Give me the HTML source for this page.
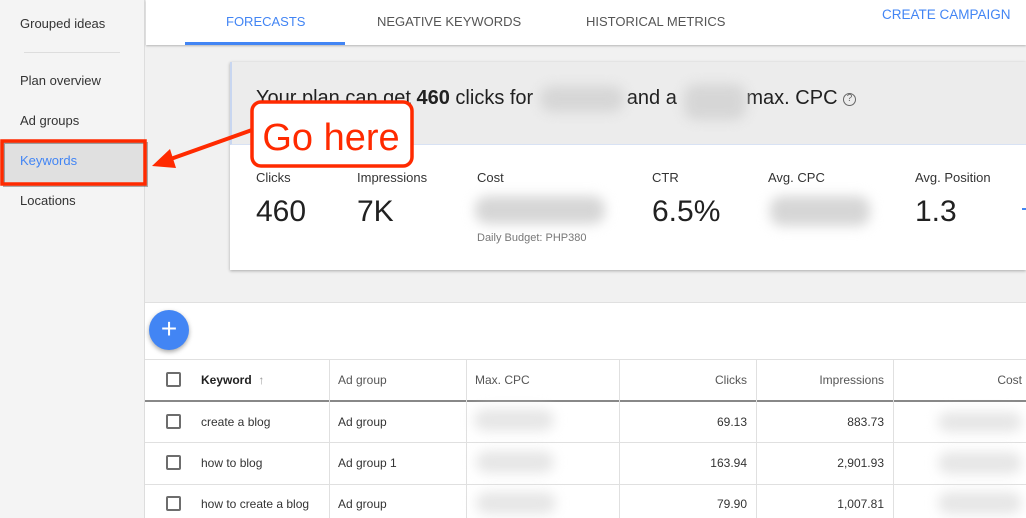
<!DOCTYPE html>
<html><head><meta charset="utf-8"><style>
*{margin:0;padding:0;box-sizing:border-box}
body{width:1026px;height:518px;overflow:hidden;position:relative;font-family:"Liberation Sans",sans-serif;background:#f1f1f1;color:#212121}
.a{position:absolute;white-space:nowrap}
.side{left:0;top:0;width:145px;height:518px;background:#f4f4f4;border-right:1px solid #ddd}
.side .it{position:absolute;left:20px;font-size:13px;color:#333}
.blur{position:absolute;background:#d6d6d6;filter:blur(6px);border-radius:12px}
.lbl{font-size:13px;color:#333}
.big{font-size:30px;color:#212121}
.th{font-size:12px;color:#555}
.td{font-size:12px;color:#333}
.cb{position:absolute;width:15px;height:15px;border:2px solid #6d6d6d;border-radius:2px;left:166px}
.vl{position:absolute;width:1px;background:#e0e0e0;top:360px;height:158px}
.hl{position:absolute;left:145px;width:881px;height:1px;background:#e0e0e0}
</style></head><body>
<div class="a side">
<div class="it" style="top:16px">Grouped ideas</div>
<div style="position:absolute;left:24px;top:52px;width:96px;height:1px;background:#ddd"></div>
<div class="it" style="top:73px">Plan overview</div>
<div class="it" style="top:113px">Ad groups</div>
<div style="position:absolute;left:0;top:142px;width:145px;height:42px;background:#e0e0e0"></div>
<div class="it" style="top:153px;color:#4285f4">Keywords</div>
<div class="it" style="top:193px">Locations</div>
</div>
<div class="a" style="left:146px;top:0;width:880px;height:45px;background:#fff;box-shadow:0 1px 2px rgba(0,0,0,.25)"></div>
<div class="a" style="left:226px;top:14px;font-size:13px;color:#4285f4">FORECASTS</div>
<div class="a" style="left:185px;top:42px;width:160px;height:3px;background:#4285f4"></div>
<div class="a" style="left:377px;top:14px;font-size:13px;color:#555">NEGATIVE KEYWORDS</div>
<div class="a" style="left:586px;top:14px;font-size:13px;color:#555">HISTORICAL METRICS</div>
<div class="a" style="left:882px;top:7px;font-size:13.5px;color:#4285f4">CREATE CAMPAIGN</div>
<!-- card -->
<div class="a" style="left:230px;top:62px;width:796px;height:208px;background:#fff;box-shadow:0 1px 3px rgba(0,0,0,.3)"></div>
<div class="a" style="left:230px;top:62px;width:796px;height:83px;background:#ececec;border-left:2px solid #c8d6f0;border-bottom:1px solid #d8e2f4"></div>
<div class="a" style="left:256px;top:87px;font-size:20px;color:#212121">Your plan can get <b>460</b> clicks for <span style="display:inline-block;width:88px"></span>and a <span style="display:inline-block;width:64px"></span>max. CPC <span style="display:inline-block;width:13px;height:13px;border:1.5px solid #666;border-radius:50%;text-align:center;line-height:10px;font-size:10px;vertical-align:3px;color:#666">?</span></div>
<div class="blur" style="left:540px;top:86px;width:84px;height:26px"></div>
<div class="blur" style="left:684px;top:84px;width:62px;height:36px"></div>
<div class="a lbl" style="left:256px;top:170px">Clicks</div>
<div class="a big" style="left:256px;top:195px">460</div>
<div class="a lbl" style="left:357px;top:170px">Impressions</div>
<div class="a big" style="left:357px;top:195px">7K</div>
<div class="a lbl" style="left:477px;top:170px">Cost</div>
<div class="blur" style="left:475px;top:196px;width:130px;height:28px"></div>
<div class="a" style="left:477px;top:232px;font-size:11px;color:#777">Daily Budget: PHP380</div>
<div class="a lbl" style="left:652px;top:170px">CTR</div>
<div class="a big" style="left:652px;top:195px">6.5%</div>
<div class="a lbl" style="left:768px;top:170px">Avg. CPC</div>
<div class="blur" style="left:770px;top:196px;width:100px;height:30px"></div>
<div class="a lbl" style="left:915px;top:170px">Avg. Position</div>
<div class="a big" style="left:915px;top:195px">1.3</div>
<div class="a" style="left:1022px;top:208px;width:4px;height:2px;background:#4285f4"></div>
<!-- table -->
<div class="a" style="left:145px;top:302px;width:881px;height:216px;background:#fff;border-top:1px solid #e0e0e0"></div>
<div class="a" style="left:149px;top:310px;width:40px;height:40px;border-radius:50%;background:#4285f4;box-shadow:0 2px 5px rgba(0,0,0,.35);color:#fff;font-size:28px;text-align:center;line-height:38px">+</div>
<div class="hl" style="top:359px"></div>
<div class="a" style="left:145px;top:400px;width:881px;height:2px;background:#888"></div>
<div class="hl" style="top:442px"></div>
<div class="hl" style="top:484px"></div>
<div class="vl" style="left:329px"></div><div class="vl" style="left:466px"></div><div class="vl" style="left:619px"></div><div class="vl" style="left:756px"></div><div class="vl" style="left:893px"></div>
<div class="cb" style="top:372px"></div><div class="cb" style="top:414px"></div><div class="cb" style="top:455px"></div><div class="cb" style="top:496px"></div>
<div class="a" style="left:201px;top:373px;font-size:12px;font-weight:bold;color:#212121">Keyword <span style="color:#999;font-weight:normal">&nbsp;↑</span></div>
<div class="a th" style="left:338px;top:373px">Ad group</div>
<div class="a th" style="left:475px;top:373px">Max. CPC</div>
<div class="a th" style="right:279px;top:373px">Clicks</div>
<div class="a th" style="right:142px;top:373px">Impressions</div>
<div class="a th" style="right:4px;top:373px">Cost</div>
<div class="a td" style="left:201px;top:415px">create a blog</div>
<div class="a td" style="left:201px;top:456px">how to blog</div>
<div class="a td" style="left:201px;top:497px">how to create a blog</div>
<div class="a td" style="left:338px;top:415px">Ad group</div>
<div class="a td" style="left:338px;top:456px">Ad group 1</div>
<div class="a td" style="left:338px;top:497px">Ad group</div>
<div class="a td" style="right:279px;top:415px">69.13</div>
<div class="a td" style="right:279px;top:456px">163.94</div>
<div class="a td" style="right:279px;top:497px">79.90</div>
<div class="a td" style="right:142px;top:415px">883.73</div>
<div class="a td" style="right:142px;top:456px">2,901.93</div>
<div class="a td" style="right:142px;top:497px">1,007.81</div>
<div class="blur" style="left:474px;top:409px;width:80px;height:22px;background:#e6e6e6"></div>
<div class="blur" style="left:476px;top:451px;width:78px;height:22px;background:#e6e6e6"></div>
<div class="blur" style="left:476px;top:492px;width:80px;height:22px;background:#e6e6e6"></div>
<div class="blur" style="left:938px;top:412px;width:84px;height:20px;background:#e6e6e6"></div>
<div class="blur" style="left:938px;top:452px;width:84px;height:22px;background:#e6e6e6"></div>
<div class="blur" style="left:938px;top:492px;width:84px;height:22px;background:#e6e6e6"></div>
<!-- annotations -->
<svg class="a" style="left:0;top:0" width="1026" height="518">
<rect x="4" y="143" width="143" height="43" fill="none" stroke="rgba(0,0,0,.3)" stroke-width="2"/>
<rect x="2" y="141" width="143" height="43" fill="none" stroke="#ff2a00" stroke-width="3.5"/>
<line x1="252" y1="130" x2="165" y2="161" stroke="#ff2a00" stroke-width="4"/>
<polygon points="152,166 170,149 176,168" fill="#ff2a00"/>
<rect x="252" y="102" width="160" height="64" rx="9" fill="#fff" stroke="#ff2a00" stroke-width="3.5"/>
<text x="331" y="150" text-anchor="middle" font-family="Liberation Sans" font-size="38" fill="#ff2a00">Go here</text>
</svg>
</body></html>
